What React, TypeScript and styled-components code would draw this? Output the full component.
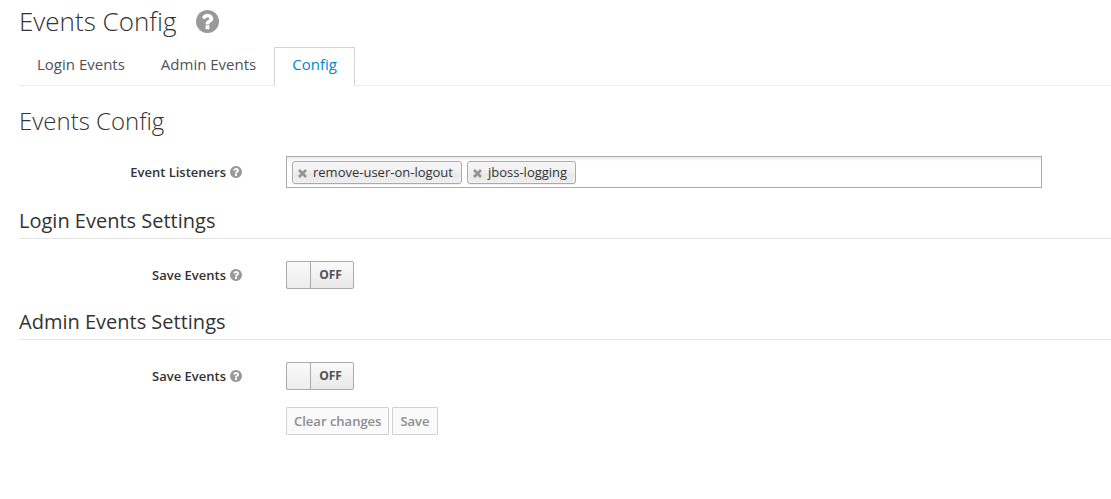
import React, { useState } from "react";
import styled, { createGlobalStyle } from "styled-components";

const GlobalStyle = createGlobalStyle`
  *, *::before, *::after { box-sizing: border-box; }
  body {
    margin: 0;
    background: #fff;
    color: #333;
    font-family: "Open Sans", "Noto Sans", sans-serif;
    font-size: 13px;
    line-height: 20px;
  }
`;

const Page = styled.main`
  padding: 5px 0 24px 19px;
`;

const PageTitle = styled.h1`
  display: flex;
  align-items: center;
  gap: 20px;
  margin: 0;
  font-size: 26px;
  font-weight: 300;
  line-height: 32px;
`;

const HelpSvg = styled.svg<{ $size: number }>`
  flex: none;
  width: ${(p) => p.$size}px;
  height: ${(p) => p.$size}px;
  fill: #999;
`;

const Tabs = styled.nav`
  display: flex;
  margin-top: 10px;
  border-bottom: 1px solid #ececec;
`;

const Tab = styled.a<{ $active?: boolean }>`
  margin-bottom: -1px;
  padding: 5px 17px 9px;
  border: 1px solid ${(p) => (p.$active ? "#d4d4d4" : "transparent")};
  border-bottom-color: ${(p) => (p.$active ? "#fff" : "transparent")};
  color: ${(p) => (p.$active ? "#0088ce" : "#4d5258")};
  font-size: 15px;
  line-height: 23px;
  text-decoration: none;
`;

const SectionTitle = styled.h2`
  margin: 19px 0 20px;
  font-size: 24px;
  font-weight: 300;
  line-height: 31px;
`;

const Group = styled.fieldset`
  min-width: 0;
  margin: 20px 0 0;
  padding: 0;
  border: 0;
`;

const Legend = styled.legend`
  width: 100%;
  margin: 0 0 22px;
  padding: 0 0 5px;
  border-bottom: 1px solid #e5e5e5;
  font-size: 20px;
  line-height: 25px;
`;

const Row = styled.div`
  display: grid;
  grid-template-columns: 223px minmax(0, 1fr);
  column-gap: 44px;
  align-items: center;
  padding-right: 69px;
`;

const LabelCell = styled.div`
  display: flex;
  align-items: center;
  justify-content: flex-end;
  gap: 4px;
`;

const Label = styled.label`
  font-weight: 600;
`;

const TagBox = styled.div`
  display: flex;
  gap: 5px;
  height: 32px;
  padding: 4px 5px;
  border: 1px solid #aaa;
  background: linear-gradient(#eee 1%, #fff 15%);
`;

const Tag = styled.span`
  display: flex;
  align-items: center;
  gap: 6px;
  height: 23px;
  padding: 0 8px 0 5px;
  border: 1px solid #aaa;
  border-radius: 3px;
  background: linear-gradient(#f4f4f4 20%, #f0f0f0 50%, #e8e8e8 52%, #eee);
  box-shadow: 0 0 2px #fff inset, 0 1px 0 rgba(0, 0, 0, 0.05);
  line-height: 20px;
  white-space: nowrap;
`;

const TagName = styled.span`
  padding-bottom: 1px;
`;

const RemoveButton = styled.button`
  display: flex;
  padding: 1px 0 0;
  border: 0;
  background: none;
  color: #949494;
  cursor: pointer;
`;

const TagInput = styled.input`
  flex: 1;
  min-width: 10px;
  padding: 0;
  border: 0;
  outline: 0;
  background: none;
  font: inherit;
`;

const SwitchButton = styled.button<{ $on: boolean }>`
  display: flex;
  flex-direction: ${(p) => (p.$on ? "row-reverse" : "row")};
  width: 68px;
  height: 28px;
  padding: 0;
  border: 1px solid #aaa;
  border-radius: 2px;
  background: linear-gradient(#fafafa, #e8e8e8);
  color: #4d5258;
  font: 700 12px/25px "Open Sans", sans-serif;
  cursor: pointer;
`;

const Knob = styled.span`
  width: 25px;
  height: 28px;
  margin: -1px;
  border: 1px solid #aaa;
  border-radius: 2px;
  background: linear-gradient(#fafafa, #ededed);
`;

const SwitchText = styled.span`
  flex: 1;
  padding-right: 2px;
  text-align: center;
`;

const Actions = styled.div`
  display: flex;
  gap: 3px;
  margin: 17px 0 0 267px;
`;

const Button = styled.button`
  height: 28px;
  padding: 0 7px;
  border: 1px solid #d1d1d1;
  border-radius: 1px;
  background: #fafafa;
  color: #8b8d8f;
  font: 600 13px/24px "Open Sans", sans-serif;
`;

function HelpIcon({ size }: { size: number }) {
  return (
    <HelpSvg $size={size} viewBox="128 128 1536 1536" aria-hidden="true">
      <path d="M1024 1376v-192q0-14-9-23t-23-9h-192q-14 0-23 9t-9 23v192q0 14 9 23t23 9h192q14 0 23-9t9-23zm256-672q0-88-55.5-163t-138.5-116-170-41q-243 0-371 213-15 24 8 42l132 100q7 6 19 6 16 0 25-12 53-68 86-92 34-24 86-24 48 0 85.5 26t37.5 59q0 38-20 61t-68 45q-63 28-115.5 86.5t-52.5 125.5v36q0 14 9 23t23 9h192q14 0 23-9t9-23q0-19 21.5-49.5t54.5-49.5q32-18 49-28.5t46-35 44.5-48 28-60.5 12.5-81zm384 192q0 209-103 385.5t-279.5 279.5-385.5 103-385.5-103-279.5-279.5-103-385.5 103-385.5 279.5-279.5 385.5-103 385.5 103 279.5 279.5 103 385.5z" />
    </HelpSvg>
  );
}

function CrossIcon() {
  return (
    <svg width="9" height="9" viewBox="0 0 9 9" aria-hidden="true">
      <path d="M1 1L8 8M8 1L1 8" stroke="currentColor" strokeWidth="2.7" />
    </svg>
  );
}

function ToggleRow({ id }: { id: string }) {
  const [on, setOn] = useState(false);
  return (
    <Row>
      <LabelCell>
        <Label htmlFor={id}>Save Events</Label>
        <HelpIcon size={12} />
      </LabelCell>
      <SwitchButton id={id} type="button" role="switch" aria-checked={on} $on={on} onClick={() => setOn(!on)}>
        <Knob />
        <SwitchText>{on ? "ON" : "OFF"}</SwitchText>
      </SwitchButton>
    </Row>
  );
}

export default function App() {
  const [listeners, setListeners] = useState(["remove-user-on-logout", "jboss-logging"]);
  return (
    <>
      <GlobalStyle />
      <Page>
        <PageTitle>
          Events Config
          <HelpIcon size={23} />
        </PageTitle>
        <Tabs>
          <Tab href="#login-events">Login Events</Tab>
          <Tab href="#admin-events">Admin Events</Tab>
          <Tab href="#config" $active aria-current="page">Config</Tab>
        </Tabs>
        <form onSubmit={(e) => e.preventDefault()}>
          <SectionTitle>Events Config</SectionTitle>
          <Row>
            <LabelCell>
              <Label htmlFor="listeners">Event Listeners</Label>
              <HelpIcon size={12} />
            </LabelCell>
            <TagBox>
              {listeners.map((name) => (
                <Tag key={name}>
                  <RemoveButton
                    type="button"
                    aria-label={`Remove ${name}`}
                    onClick={() => setListeners(listeners.filter((l) => l !== name))}
                  >
                    <CrossIcon />
                  </RemoveButton>
                  <TagName>{name}</TagName>
                </Tag>
              ))}
              <TagInput id="listeners" type="text" autoComplete="off" />
            </TagBox>
          </Row>
          <Group>
            <Legend>Login Events Settings</Legend>
            <ToggleRow id="save-login-events" />
          </Group>
          <Group>
            <Legend>Admin Events Settings</Legend>
            <ToggleRow id="save-admin-events" />
          </Group>
          <Actions>
            <Button type="button" disabled>Clear changes</Button>
            <Button type="submit" disabled>Save</Button>
          </Actions>
        </form>
      </Page>
    </>
  );
}
